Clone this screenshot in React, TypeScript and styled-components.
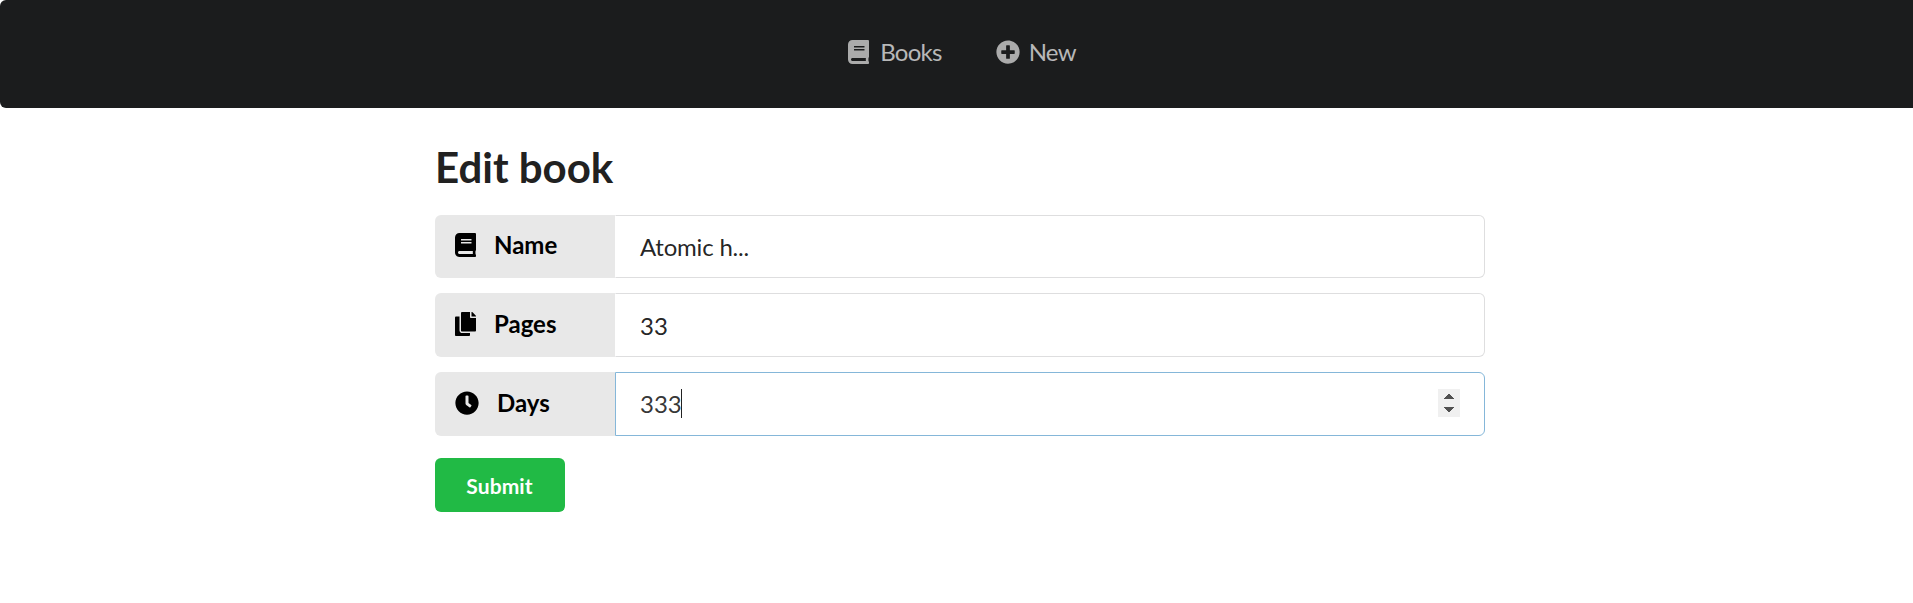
import React from "react";
import styled, { createGlobalStyle } from "styled-components";
import { FaBook, FaPlusCircle, FaCopy, FaClock } from "react-icons/fa";

const GlobalStyle = createGlobalStyle`
  *, *::before, *::after { box-sizing: border-box; }
  html, body { margin: 0; background: #fff; }
  body { font-family: Lato, "Liberation Sans", sans-serif; font-size: 21px; color: rgba(0, 0, 0, 0.87); overflow: hidden; }
`;

const Menu = styled.nav`
  display: flex;
  justify-content: center;
  height: 108px;
  padding-left: 11px;
  padding-bottom: 4px;
  background: #1b1c1d;
  border-radius: 6px 0 0 6px;
`;

const MenuItem = styled.a<{ $gap: number; $icon: number }>`
  display: flex;
  align-items: center;
  gap: ${(p) => p.$gap}px;
  padding: 0 27px;
  font-size: 24px;
  line-height: 24px;
  letter-spacing: -0.75px;
  color: rgba(255, 255, 255, 0.7);
  svg { display: block; width: ${(p) => p.$icon}px; height: 24px; opacity: 0.9; }
`;

const Container = styled.main`
  width: 1050px;
  margin-left: 435px;
`;

const Title = styled.h1`
  margin: 0;
  padding-top: 32px;
  height: 107px;
  font-size: 42px;
  line-height: 54px;
  font-weight: 700;
  color: #212121;
`;

const Form = styled.form`
  display: flex;
  flex-direction: column;
  align-items: flex-start;
  gap: 15px;
`;

const Field = styled.div<{ $height: number }>`
  display: flex;
  width: 100%;
  height: ${(p) => p.$height}px;
`;

const Label = styled.label<{ $icon: number }>`
  display: flex;
  align-items: center;
  gap: 18px;
  width: 180px;
  padding: 0 0 3px 20px;
  background: #e8e8e8;
  border-radius: 6px 0 0 6px;
  color: #000;
  font-size: 24px;
  line-height: 24px;
  font-weight: 700;
  svg { display: block; width: ${(p) => p.$icon}px; height: 24px; }
`;

const Input = styled.div<{ $focused?: boolean; $numeric?: boolean }>`
  display: flex;
  align-items: center;
  flex: 1;
  padding: 0 24px ${(p) => (p.$focused ? 2 : 0)}px 24px;
  border: 1px solid ${(p) => (p.$focused ? "#85b7d9" : "#dededf")};
  border-left-color: ${(p) => (p.$focused ? "#85b7d9" : "transparent")};
  border-radius: 0 6px 6px 0;
  color: ${(p) => (p.$focused ? "rgba(0, 0, 0, 0.8)" : "rgba(0, 0, 0, 0.87)")};
  font-size: 24px;
  line-height: 29px;
  letter-spacing: ${(p) => (p.$numeric ? "0" : "-0.2px")};
`;

const Caret = styled.span`
  width: 1px;
  height: 29px;
  margin: 1px 0 0 -0.76px;
  background: #222;
`;

const Spinner = styled.span`
  display: flex;
  margin-left: auto;
  width: 22px;
  height: 28px;
  background: #f0f0f0;
`;

const Submit = styled.button`
  margin: 7px 0 0;
  width: 130px;
  height: 54px;
  padding: 1px 1px 0 0;
  border: 0;
  border-radius: 6px;
  background: #21ba45;
  color: #fff;
  font-family: inherit;
  font-size: 21px;
  line-height: 21px;
  font-weight: 700;
  letter-spacing: 0.1px;
`;

export default function App() {
  return (
    <>
      <GlobalStyle />
      <Menu>
        <MenuItem $gap={11} $icon={21}>
          <FaBook />
          Books
        </MenuItem>
        <MenuItem $gap={9} $icon={24}>
          <FaPlusCircle />
          New
        </MenuItem>
      </Menu>
      <Container>
        <Title>Edit book</Title>
        <Form>
          <Field $height={63}>
            <Label $icon={21}>
              <FaBook />
              Name
            </Label>
            <Input role="textbox">Atomic h...</Input>
          </Field>
          <Field $height={64}>
            <Label $icon={21}>
              <FaCopy />
              Pages
            </Label>
            <Input role="textbox" $numeric>33</Input>
          </Field>
          <Field $height={64}>
            <Label $icon={24}>
              <FaClock />
              Days
            </Label>
            <Input role="textbox" $numeric $focused>
              333
              <Caret />
              <Spinner>
                <svg width="22" height="28" viewBox="0 0 22 28" fill="#505050" shapeRendering="crispEdges">
                  <path d="M5.5 10 11 4.5 16.5 10Z M5.5 18 11 23.5 16.5 18Z" />
                </svg>
              </Spinner>
            </Input>
          </Field>
          <Submit type="button">Submit</Submit>
        </Form>
      </Container>
    </>
  );
}
